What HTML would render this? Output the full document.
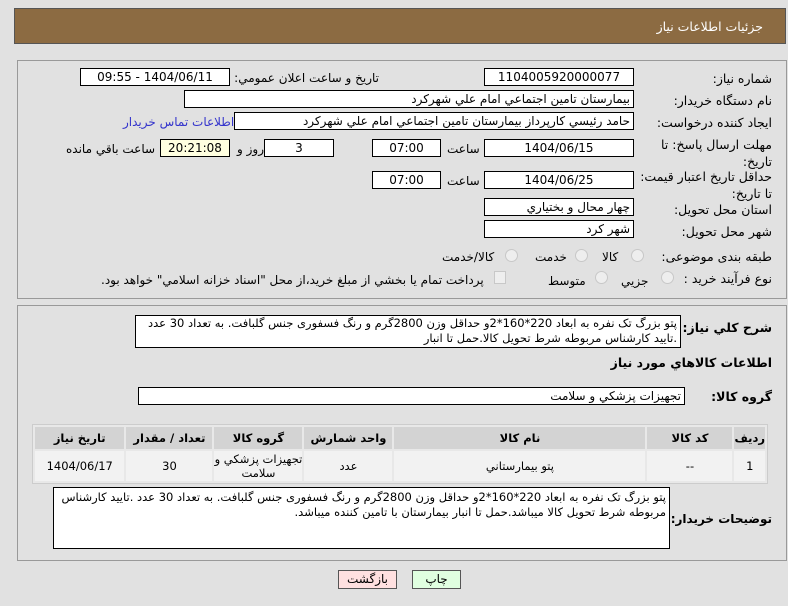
<!DOCTYPE html>
<html><head><meta charset="utf-8">
<style>
*{margin:0;padding:0;box-sizing:border-box}
body{width:788px;height:606px;background:#e1e1e1;font-family:Tahoma,"DejaVu Sans","Liberation Sans",sans-serif;font-size:12px;color:#000;position:relative;overflow:hidden;direction:rtl}
.a{position:absolute;white-space:nowrap}
.in{position:absolute;background:#fff;border:1px solid #000;height:18px;line-height:16px;font-size:12px;padding:0 3px;white-space:nowrap;overflow:hidden}
.c{text-align:center}
.lbl{position:absolute;right:16px;font-size:12.5px;white-space:nowrap}
.rad{position:absolute;width:13px;height:13px;border-radius:50%;border:1px solid #c8c8c8;background:#eee}
table{position:absolute;left:32px;top:424px;width:736px;border-collapse:separate;border-spacing:2px;background:#e8e8e8;border:1px solid #ccc}
th{background:#d3d3d3;height:22px;font-size:11.5px;font-weight:bold}
td{background:#f2f2f2;height:30px;text-align:center;font-size:11.5px}
</style></head><body>
<div class="a" style="left:14px;top:8px;width:772px;height:36px;background:#8c6b42;border:1px solid #555"></div>
<div class="a" style="right:25px;top:19px;color:#fff;font-size:12.5px">جزئيات اطلاعات نياز</div>

<div class="a" style="left:17px;top:60px;width:770px;height:239px;border:1px solid #999"></div>
<div class="a" style="left:17px;top:305px;width:770px;height:256px;border:1px solid #999"></div>

<div class="lbl" style="top:71px">شماره نياز:</div>
<div class="in c" style="left:484px;top:68px;width:150px">1104005920000077</div>
<div class="a" style="right:409px;top:71px">تاريخ و ساعت اعلان عمومي:</div>
<div class="in c" style="left:80px;top:68px;width:150px">1404/06/11 - 09:55</div>

<div class="lbl" style="top:93px">نام دستگاه خريدار:</div>
<div class="in" style="left:184px;top:90px;width:450px">بيمارستان تامين اجتماعي امام علي شهركرد</div>

<div class="lbl" style="top:115px">ايجاد كننده درخواست:</div>
<div class="in" style="left:234px;top:112px;width:400px">حامد رئيسي كارپرداز بيمارستان تامين اجتماعي امام علي شهركرد</div>
<div class="a" style="left:123px;top:115px;color:#3333cc">اطلاعات تماس خريدار</div>

<div class="lbl" style="top:136px;line-height:17px;text-align:right">مهلت ارسال پاسخ: تا<br>تاريخ:</div>
<div class="in c" style="left:484px;top:139px;width:150px">1404/06/15</div>
<div class="a" style="left:447px;top:142px">ساعت</div>
<div class="in c" style="left:372px;top:139px;width:69px">07:00</div>
<div class="in c" style="left:264px;top:139px;width:70px">3</div>
<div class="a" style="left:237px;top:142px">روز و</div>
<div class="in c" style="left:160px;top:139px;width:70px;background:#ffffe0">20:21:08</div>
<div class="a" style="left:66px;top:142px">ساعت باقي مانده</div>

<div class="lbl" style="top:168px;line-height:17px;text-align:right">حداقل تاريخ اعتبار قيمت:<br>تا تاريخ:</div>
<div class="in c" style="left:484px;top:171px;width:150px">1404/06/25</div>
<div class="a" style="left:447px;top:174px">ساعت</div>
<div class="in c" style="left:372px;top:171px;width:69px">07:00</div>

<div class="lbl" style="top:202px">استان محل تحويل:</div>
<div class="in" style="left:484px;top:198px;width:150px">چهار محال و بختياري</div>
<div class="lbl" style="top:224px">شهر محل تحويل:</div>
<div class="in" style="left:484px;top:220px;width:150px">شهر كرد</div>

<div class="lbl" style="top:249px">طبقه بندی موضوعی:</div>
<div class="rad" style="left:631px;top:249px"></div><div class="a" style="left:602px;top:250px">كالا</div>
<div class="rad" style="left:575px;top:249px"></div><div class="a" style="left:535px;top:250px">خدمت</div>
<div class="rad" style="left:505px;top:249px"></div><div class="a" style="left:442px;top:250px">كالا/خدمت</div>

<div class="lbl" style="top:271px">نوع فرآيند خريد :</div>
<div class="rad" style="left:661px;top:271px"></div><div class="a" style="left:621px;top:274px">جزيي</div>
<div class="rad" style="left:595px;top:271px"></div><div class="a" style="left:548px;top:274px">متوسط</div>
<div class="a" style="left:494px;top:271px;width:12px;height:13px;border:1px solid #c8c8c8;background:#eee"></div>
<div class="a" style="left:101px;top:273px">پرداخت تمام يا بخشي از مبلغ خريد،از محل "اسناد خزانه اسلامي" خواهد بود.</div>

<div class="a" style="right:16px;top:320px;font-weight:bold;font-size:12.5px">شرح كلي نياز:</div>
<div class="in" style="left:135px;top:315px;width:546px;height:33px;white-space:normal;line-height:15px;font-size:11.5px">پتو بزرگ تک نفره به ابعاد 220*160*2و حداقل وزن 2800گرم و رنگ فسفوری جنس گلبافت. به تعداد 30 عدد .تایید کارشناس مربوطه شرط تحویل کالا.حمل تا انبار</div>
<div class="a" style="right:16px;top:355px;font-weight:bold;font-size:12.5px">اطلاعات كالاهاي مورد نياز</div>
<div class="a" style="right:16px;top:389px;font-weight:bold;font-size:12.5px">گروه كالا:</div>
<div class="in" style="left:138px;top:387px;width:547px">تجهيزات پزشكي و سلامت</div>

<table>
<tr><th style="width:26px">رديف</th><th style="width:85px">كد كالا</th><th style="width:251px">نام كالا</th><th style="width:88px">واحد شمارش</th><th style="width:88px">گروه كالا</th><th style="width:86px">تعداد / مقدار</th><th>تاريخ نياز</th></tr>
<tr><td>1</td><td>--</td><td>پتو بيمارستاني</td><td>عدد</td><td style="line-height:14px">تجهيزات پزشكي و سلامت</td><td>30</td><td>1404/06/17</td></tr>
</table>

<div class="a" style="right:16px;top:512px;font-weight:bold;font-size:12px">توضيحات خريدار:</div>
<div class="in" style="left:53px;top:487px;width:617px;height:62px;white-space:normal;line-height:15px;padding-top:2px;font-size:11.5px">پتو بزرگ تک نفره به ابعاد 220*160*2و حداقل وزن 2800گرم و رنگ فسفوری جنس گلبافت. به تعداد 30 عدد .تایید کارشناس مربوطه شرط تحویل کالا میباشد.حمل تا انبار بیمارستان با تامین کننده میباشد.</div>

<div class="a c" style="left:338px;top:570px;width:59px;height:19px;background:#ffe0e0;border:1px solid #555;line-height:17px">بازگشت</div>
<div class="a c" style="left:412px;top:570px;width:49px;height:19px;background:#e0ffe0;border:1px solid #555;line-height:17px">چاپ</div>
</body></html>
